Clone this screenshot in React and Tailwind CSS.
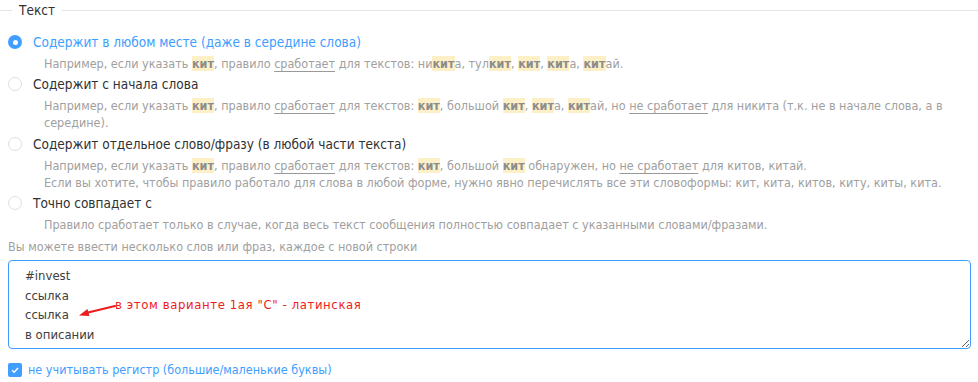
import { useState } from "react";

const font = { fontFamily: '"DejaVu Sans Condensed", "Liberation Sans", sans-serif' };

function Kit({ children }) {
  return <b className="bg-[#fdf0c6] font-bold text-[#8c8c8c]">{children}</b>;
}

function U({ children }) {
  return <span className="underline decoration-[#999] underline-offset-[3px]">{children}</span>;
}

function Radio({ checked, label, onClick }) {
  return (
    <label className="flex h-[20px] cursor-pointer items-center" onClick={onClick}>
      <span
        className={
          checked
            ? "flex h-[14px] w-[14px] items-center justify-center rounded-full bg-[#409eff]"
            : "flex h-[14px] w-[14px] items-center justify-center rounded-full border border-[#dcdfe6] bg-white"
        }
      >
        {checked && <span className="h-[5px] w-[5px] rounded-full bg-white"></span>}
      </span>
      <span className={checked ? "ml-[11px] text-[13.5px] text-[#409eff]" : "ml-[11px] text-[13.5px] text-[#303133]"}>
        {label}
      </span>
    </label>
  );
}

function Desc({ children }) {
  return <div className="mt-[3px] pl-[36px] text-[12.5px] leading-[17px] text-[#a0a0a0]">{children}</div>;
}

export default function App() {
  const [mode, setMode] = useState(0);
  const [ignoreCase, setIgnoreCase] = useState(true);
  const [words, setWords] = useState("#invest\nссылка\nсcылка\nв описании");

  return (
    <div className="h-[382px] w-[978px] overflow-hidden bg-white" style={font}>
      <fieldset className="border-0 border-t border-[#e4e4e4] px-[8px]">
        <legend className="ml-[4px] px-[7px] text-[13.5px] leading-[20px] text-[#303133]">Текст</legend>

        <div className="mt-[12px] flex flex-col gap-[2px]">
          <div>
            <Radio checked={mode === 0} onClick={() => setMode(0)} label="Содержит в любом месте (даже в середине слова)" />
            <Desc>
              Например, если указать <Kit>кит</Kit>, правило <U>сработает</U> для текстов: ни<Kit>кит</Kit>а, тул<Kit>кит</Kit>,{" "}
              <Kit>кит</Kit>, <Kit>кит</Kit>а, <Kit>кит</Kit>ай.
            </Desc>
          </div>
          <div>
            <Radio checked={mode === 1} onClick={() => setMode(1)} label="Содержит с начала слова" />
            <Desc>
              Например, если указать <Kit>кит</Kit>, правило <U>сработает</U> для текстов: <Kit>кит</Kit>, большой <Kit>кит</Kit>,{" "}
              <Kit>кит</Kit>а, <Kit>кит</Kit>ай, но <U>не сработает</U> для никита (т.к. не в начале слова, а в середине).
            </Desc>
          </div>
          <div className="mt-[1px]">
            <Radio checked={mode === 2} onClick={() => setMode(2)} label="Содержит отдельное слово/фразу (в любой части текста)" />
            <Desc>
              Например, если указать <Kit>кит</Kit>, правило <U>сработает</U> для текстов: <Kit>кит</Kit>, большой <Kit>кит</Kit>{" "}
              обнаружен, но <U>не сработает</U> для китов, китай.
              <br />
              Если вы хотите, чтобы правило работало для слова в любой форме, нужно явно перечислять все эти словоформы: кит, кита, китов, киту, киты, кита.
            </Desc>
          </div>
          <div>
            <Radio checked={mode === 3} onClick={() => setMode(3)} label="Точно совпадает с" />
            <Desc>Правило сработает только в случае, когда весь текст сообщения полностью совпадает с указанными словами/фразами.</Desc>
          </div>
        </div>

        <div className="mt-[5px] text-[12.5px] leading-[18px] text-[#a0a0a0]">Вы можете ввести несколько слов или фраз, каждое с новой строки</div>

        <div className="relative mt-[4px] mr-[-1px]">
          <textarea
            value={words}
            onChange={(e) => setWords(e.target.value)}
            className="block h-[89px] w-full rounded-[4px] border border-[#409eff] px-[16px] py-[5px] text-[13px] leading-[19.6px] text-[#404040] outline-none"
            style={font}
          />
          <div className="pointer-events-none absolute left-[107px] top-[35px] text-[13px] leading-[20px] tracking-[0.6px] text-[#ee1c1c]">
            в этом варианте 1ая "С" - латинская
          </div>
          <svg className="pointer-events-none absolute left-[60px] top-[40px]" width="50" height="20" viewBox="0 0 50 20">
            <path d="M47 6 L18 13" stroke="#ee1c1c" strokeWidth="2.2" strokeLinecap="round" />
            <path d="M11 15.5 L19.5 9 L21.5 16 Z" fill="#ee1c1c" />
          </svg>
        </div>

        <label className="mt-[11px] flex h-[20px] cursor-pointer items-center" onClick={() => setIgnoreCase(!ignoreCase)}>
          <span
            className={
              ignoreCase
                ? "flex h-[14px] w-[14px] items-center justify-center rounded-[2px] bg-[#409eff]"
                : "flex h-[14px] w-[14px] items-center justify-center rounded-[2px] border border-[#dcdfe6] bg-white"
            }
          >
            {ignoreCase && (
              <svg width="10" height="10" viewBox="0 0 10 10">
                <path d="M2 5.2 L4.2 7.3 L8 3" stroke="white" strokeWidth="1.4" fill="none" />
              </svg>
            )}
          </span>
          <span className={ignoreCase ? "ml-[6px] text-[12.5px] text-[#409eff]" : "ml-[6px] text-[12.5px] text-[#303133]"}>
            не учитывать регистр (большие/маленькие буквы)
          </span>
        </label>
      </fieldset>
    </div>
  );
}
